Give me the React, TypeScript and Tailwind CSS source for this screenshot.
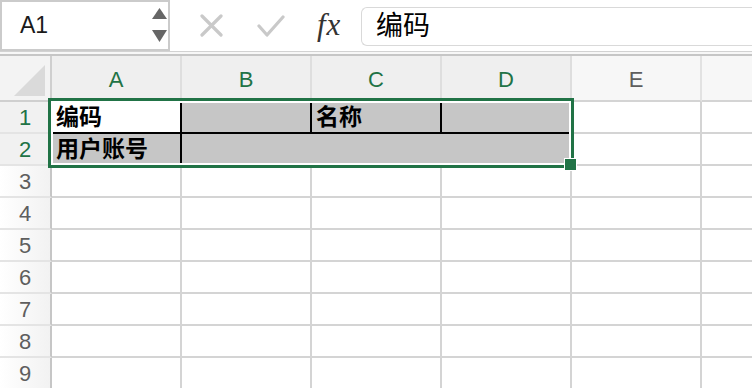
import React from 'react';

const green = 'text-[#217346]';
const cols = ['A', 'B', 'C', 'D', 'E', 'F'];
const rows = [1, 2, 3, 4, 5, 6, 7, 8, 9];

const cjk = "font-['Liberation_Sans','Noto_Sans_CJK_SC',sans-serif]";

const App = () => {
  return (
    <div className="w-[752px] h-[388px] overflow-hidden bg-white font-['Liberation_Sans',Arial,sans-serif]">
      {/* formula bar */}
      <div className="flex h-[51px]">
        <div className="w-[170px] h-[51px] border-2 border-[#cbcbcb] flex items-center justify-between pl-[18px] pr-[1px]">
          <span className="text-[23px] text-[#1a1a1a] leading-none">A1</span>
          <div className="flex flex-col gap-[11px] pb-[1px]">
            <svg width="15" height="11" viewBox="0 0 15 11">
              <path d="M7.5 0 L15 11 L0 11 Z" fill="#666" />
            </svg>
            <svg width="15" height="12" viewBox="0 0 15 12">
              <path d="M0 0 L15 0 L7.5 12 Z" fill="#666" />
            </svg>
          </div>
        </div>
        <div className="w-[191px] flex items-center">
          <svg className="ml-[30px]" width="23" height="23" viewBox="0 0 23 23">
            <path d="M2 2 L21 21 M21 2 L2 21" stroke="#c9c9c9" strokeWidth="3.2" strokeLinecap="round" />
          </svg>
          <svg className="ml-[34px]" width="28" height="22" viewBox="0 0 28 22">
            <path d="M2 11 L10 20 L26 2" stroke="#c9c9c9" strokeWidth="3.2" fill="none" strokeLinecap="round" strokeLinejoin="round" />
          </svg>
          <span className="ml-[32px] font-['Liberation_Serif',serif] italic text-[31px] tracking-[1px] text-[#333333] leading-none -mt-[3px]">fx</span>
        </div>
        <div className="flex-1 mt-[7px] mb-[5px] border border-r-0 border-[#d9d9d9] rounded-l-[6px] flex items-center pl-[14px]">
          <span className={`${cjk} text-[27px] text-black leading-none`}>编码</span>
        </div>
      </div>
      <div className="h-[5px] border-t border-b-2 border-t-[#d2d2d2] border-b-[#c6c6c6] bg-[#f7f7f7]" />

      {/* sheet */}
      <div className="relative">
        <div className="grid grid-cols-[52px_repeat(6,130px)] grid-rows-[46px_repeat(9,32px)]">
          <div className="bg-[#f3f3f3] border-r-2 border-b-2 border-[#cfcfcf] flex items-end justify-end pr-[5px] pb-[4px]">
            <svg width="31" height="31" viewBox="0 0 31 31">
              <path d="M31 0 L31 31 L0 31 Z" fill="#dadada" />
            </svg>
          </div>
          {cols.map((c, i) => (
            <div
              key={c}
              className={
                i < 4
                  ? 'bg-[#efefef] border-r-2 border-b-2 border-r-[#dedede] border-b-[#cfcfcf] flex items-center justify-center pt-[4px]'
                  : 'bg-[#f7f7f7] border-r-2 border-b-2 border-r-[#e2e2e2] border-b-[#d4d4d4] flex items-center justify-center pt-[4px]'
              }
            >
              {c !== 'F' && (
                <span className={`text-[22px] leading-none ${i < 4 ? green : 'text-[#5e5e5e]'}`}>{c}</span>
              )}
            </div>
          ))}

          {rows.map((r) => (
            <React.Fragment key={r}>
              <div
                className={
                  r < 3
                    ? 'bg-[#f1f1f1] border-r-2 border-b-2 border-r-[#c6c6c6] border-b-[#e4e4e4] flex items-center justify-center pt-[1px]'
                    : 'bg-gradient-to-r from-white to-[#f2f2f2] border-r-2 border-b-2 border-r-[#c6c6c6] border-b-[#e4e4e4] flex items-center justify-center pt-[1px]'
                }
              >
                <span className={`text-[22px] leading-none ${r < 3 ? green : 'text-[#5e5e5e]'}`}>{r}</span>
              </div>

              {r === 1 && (
                <>
                  <div className="bg-white border-r-2 border-b-2 border-black flex items-center pl-[4px]">
                    <span className={`${cjk} font-bold text-[23px] leading-none text-black`}>编码</span>
                  </div>
                  <div className="bg-[#c6c6c6] border-r-2 border-b-2 border-black" />
                  <div className="bg-[#c6c6c6] border-r-2 border-b-2 border-black flex items-center pl-[4px]">
                    <span className={`${cjk} font-bold text-[23px] leading-none text-black`}>名称</span>
                  </div>
                  <div className="bg-[#c6c6c6] border-r-2 border-b-2 border-r-[#c6c6c6] border-b-black" />
                </>
              )}
              {r === 2 && (
                <>
                  <div className="bg-[#c6c6c6] border-r-2 border-b-2 border-r-black border-b-[#c6c6c6] flex items-center pl-[4px]">
                    <span className={`${cjk} font-bold text-[23px] leading-none text-black`}>用户账号</span>
                  </div>
                  <div className="col-span-3 bg-[#c6c6c6] border-b-2 border-[#c6c6c6]" />
                </>
              )}
              {r > 2 &&
                cols.slice(0, 4).map((c) => (
                  <div key={c} className="bg-white border-r-2 border-b-2 border-[#d4d4d4]" />
                ))}
              {cols.slice(4).map((c) => (
                <div key={c} className="bg-white border-r-2 border-b-2 border-[#d4d4d4]" />
              ))}
            </React.Fragment>
          ))}
        </div>

        {/* selection range */}
        <div className="absolute left-[48px] top-[42px] w-[526px] h-[70px] border-[3px] border-[#217346] shadow-[inset_0_0_0_2px_white] pointer-events-none" />
        {/* fill handle */}
        <div className="absolute left-[564px] top-[102px] w-[13px] h-[13px] bg-[#217346] border border-white" />
      </div>
    </div>
  );
};

export default App;
